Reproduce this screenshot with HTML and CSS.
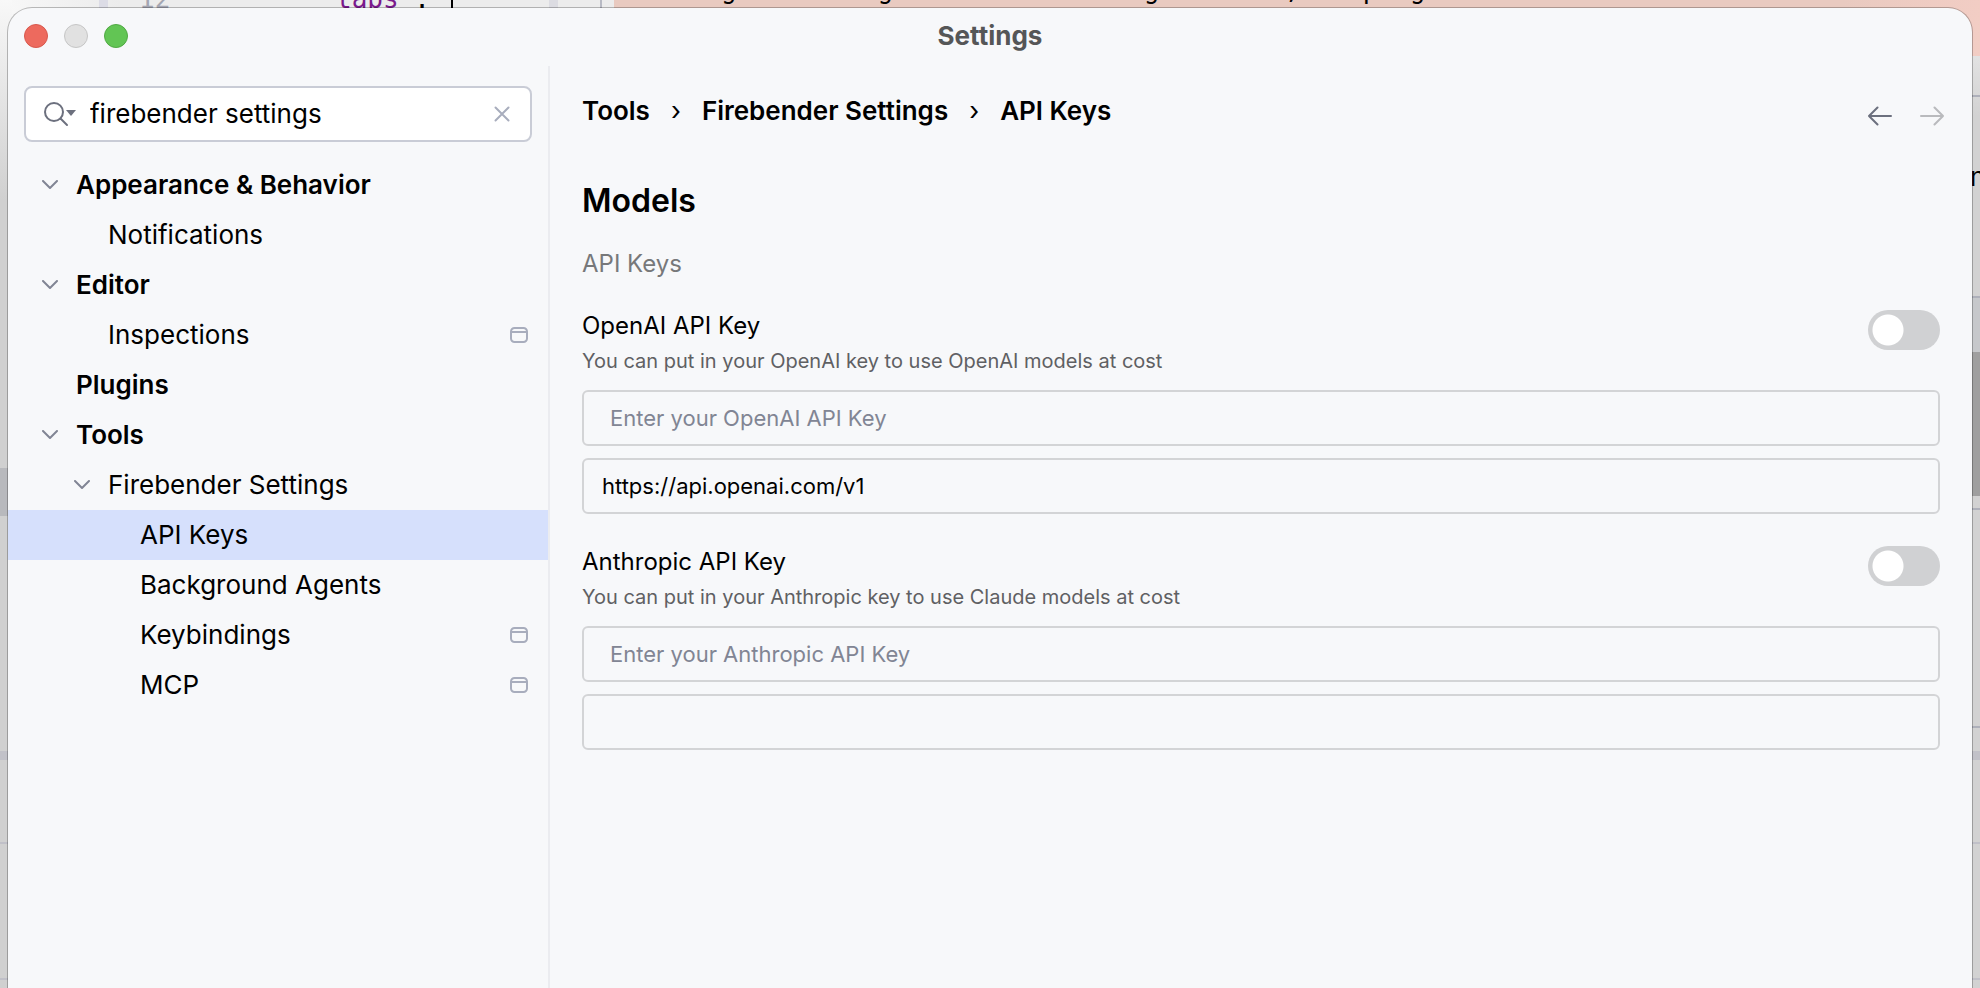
FILE: index.html
```html
<!DOCTYPE html>
<html lang="en">
<head>
<meta charset="utf-8">
<meta name="viewport" content="width=device-width, initial-scale=1">
<title>Settings</title>
<link rel="stylesheet" href="styles.css">
</head>
<body>
<svg class="symbols" aria-hidden="true">
  <symbol id="chevron" viewBox="0 0 16 10"><path d="M1 1l7 7 7-7" fill="none" stroke="currentColor" stroke-width="2" stroke-linecap="round" stroke-linejoin="round"/></symbol>
  <symbol id="project" viewBox="0 0 18 16"><path d="M1 4.500A3.500 3.500 0 0 1 4.500 1h9A3.500 3.500 0 0 1 17 4.500v7a3.500 3.500 0 0 1-3.500 3.500h-9A3.500 3.500 0 0 1 1 11.500zM1 5h16" fill="none" stroke="currentColor" stroke-width="2"/></symbol>
</svg>

<div class="editor" aria-hidden="true">
  <div class="code">
    <span class="line-number">12</span>
    <span class="code-text"><span class="keyword">tabs</span> .</span>
    <span class="caret"></span>
    <div class="diff"><span class="diff-text">g         g                g        ,    p  g</span></div>
  </div>
  <div class="edge edge-left"></div>
  <div class="edge edge-right"><span class="clipped">n</span></div>
</div>

<div class="window">
  <header class="titlebar">
    <div class="lights">
      <button class="light close" aria-label="Close"></button>
      <button class="light minimize" aria-label="Minimize" disabled></button>
      <button class="light zoom" aria-label="Zoom"></button>
    </div>
    <h1 class="title">Settings</h1>
  </header>

  <aside class="sidebar">
    <div class="search">
      <button class="icon-button" aria-label="Search history">
        <svg width="34" height="26" viewBox="0 0 34 26" fill="none"><circle cx="10" cy="11" r="9" stroke="#6c707e" stroke-width="2"/><path d="M16.500 17.500L23 24" stroke="#6c707e" stroke-width="2" stroke-linecap="round"/><path d="M22 9h10l-5 6z" fill="#6c707e"/></svg>
      </button>
      <input class="search-input" type="text" value="firebender settings" aria-label="Search settings">
      <button class="icon-button clear" aria-label="Clear search">
        <svg width="16" height="16" viewBox="0 0 16 16"><path d="M1.500 1.500l13 13M14.500 1.500l-13 13" stroke="#a8adbd" stroke-width="2" stroke-linecap="round"/></svg>
      </button>
    </div>
    <nav aria-label="Settings categories">
      <ul class="tree">
        <li class="row group"><button class="icon-button twisty" aria-label="Collapse Appearance &amp; Behavior"><svg width="16" height="10"><use href="#chevron"/></svg></button><a href="#appearance">Appearance &amp; Behavior</a></li>
        <li class="row level-1"><span class="twisty"></span><a href="#notifications">Notifications</a></li>
        <li class="row group"><button class="icon-button twisty" aria-label="Collapse Editor"><svg width="16" height="10"><use href="#chevron"/></svg></button><a href="#editor">Editor</a></li>
        <li class="row level-1"><span class="twisty"></span><a href="#inspections">Inspections</a><svg class="project" width="18" height="16"><use href="#project"/></svg></li>
        <li class="row group"><span class="twisty"></span><a href="#plugins">Plugins</a></li>
        <li class="row group"><button class="icon-button twisty" aria-label="Collapse Tools"><svg width="16" height="10"><use href="#chevron"/></svg></button><a href="#tools">Tools</a></li>
        <li class="row level-1"><button class="icon-button twisty" aria-label="Collapse Firebender Settings"><svg width="16" height="10"><use href="#chevron"/></svg></button><a href="#firebender">Firebender Settings</a></li>
        <li class="row level-2 selected"><span class="twisty"></span><a href="#api-keys" aria-current="page">API Keys</a></li>
        <li class="row level-2"><span class="twisty"></span><a href="#agents">Background Agents</a></li>
        <li class="row level-2"><span class="twisty"></span><a href="#keybindings">Keybindings</a><svg class="project" width="18" height="16"><use href="#project"/></svg></li>
        <li class="row level-2"><span class="twisty"></span><a href="#mcp">MCP</a><svg class="project" width="18" height="16"><use href="#project"/></svg></li>
      </ul>
    </nav>
  </aside>

  <main class="content">
    <div class="content-head">
      <nav class="crumbs" aria-label="Breadcrumb">
        <a href="#tools">Tools</a><span class="separator">›</span><a href="#firebender">Firebender Settings</a><span class="separator">›</span><a href="#api-keys">API Keys</a>
      </nav>
      <div class="history">
        <button class="icon-button" aria-label="Back"><svg width="24" height="20" viewBox="0 0 24 20"><path d="M23 10H1M9.500 1.500L1 10l8.500 8.500" fill="none" stroke="#6c707e" stroke-width="2" stroke-linecap="round" stroke-linejoin="round"/></svg></button>
        <button class="icon-button" aria-label="Forward" disabled><svg width="24" height="20" viewBox="0 0 24 20"><path d="M1 10h22M14.500 1.500L23 10l-8.500 8.500" fill="none" stroke="#b9babd" stroke-width="2" stroke-linecap="round" stroke-linejoin="round"/></svg></button>
      </div>
    </div>

    <h2 class="heading">Models</h2>
    <h3 class="subheading">API Keys</h3>

    <section class="provider">
      <div class="provider-head">
        <div>
          <label class="name" for="openai-on">OpenAI API Key</label>
          <p class="hint">You can put in your OpenAI key to use OpenAI models at cost</p>
        </div>
        <input class="switch" type="checkbox" role="switch" id="openai-on">
      </div>
      <input class="field key" type="text" placeholder="Enter your OpenAI API Key" aria-label="OpenAI API key">
      <input class="field" type="text" value="https://api.openai.com/v1" aria-label="OpenAI base URL">
    </section>

    <section class="provider">
      <div class="provider-head">
        <div>
          <label class="name" for="anthropic-on">Anthropic API Key</label>
          <p class="hint">You can put in your Anthropic key to use Claude models at cost</p>
        </div>
        <input class="switch" type="checkbox" role="switch" id="anthropic-on">
      </div>
      <input class="field key" type="text" placeholder="Enter your Anthropic API Key" aria-label="Anthropic API key">
      <input class="field" type="text" aria-label="Anthropic base URL">
    </section>
  </main>
</div>
</body>
</html>
```
FILE: styles.css
```css
* { box-sizing: border-box; }

body {
  margin: 0;
  padding: 8px 8px 0;
  position: relative;
  min-height: 100vh;
  overflow: hidden;
  font: 26px/32px Inter, "Liberation Sans", sans-serif;
  color: #000;
}

h1, h2, h3, p, ul { margin: 0; padding: 0; }
a { color: inherit; text-decoration: none; }
svg { display: block; }
.symbols { position: absolute; width: 0; height: 0; }

.icon-button {
  display: flex;
  align-items: center;
  justify-content: center;
  padding: 0;
  border: 0;
  background: none;
}

/* Editor showing behind the dialog */
.editor {
  position: absolute;
  inset: 0;
  background: #efefef;
}

.code {
  position: absolute;
  inset: 0 0 auto;
  height: 56px;
  overflow: hidden;
  background:
    linear-gradient(#dcdce6, #dcdce6) 99px 0 / 9px 100% no-repeat,
    linear-gradient(#dcdce2, #dcdce2) 549px 0 / 9px 100% no-repeat,
    linear-gradient(#b8bac4, #b8bac4) 600px 0 / 2px 100% no-repeat,
    linear-gradient(90deg, #f8f8f8, #ececec 120px);
  font: 26px/32px "DejaVu Sans Mono", monospace;
  white-space: pre;
}

.line-number, .code-text, .caret, .diff, .diff-text { position: absolute; }
.line-number { left: 139px; top: -17px; color: #a4a6b2; }
.code-text { left: 336px; top: -17px; }
.keyword { color: #7a1a8c; }
.caret { left: 451px; top: 0; width: 2px; height: 8px; background: #000; }
.diff {
  left: 614px;
  right: 0;
  top: 0;
  height: 56px;
  background: linear-gradient(90deg, #e9cac0, #e9cac0 90%, #f2cdc4);
}
.diff-text { left: 107px; top: -27px; }

.edge { position: absolute; bottom: 0; width: 12px; }
.edge-left {
  left: 0;
  top: 0;
  background:
    linear-gradient(#b8b9bd, #b8b9bd) 0 468px / 100% 48px no-repeat,
    linear-gradient(#c1c1c8, #c1c1c8) 0 751px / 100% 9px no-repeat,
    linear-gradient(#c0c0c8, #c0c0c8) 0 842px / 100% 2px no-repeat,
    linear-gradient(#c0c0c8, #c0c0c8) 0 978px / 100% 2px no-repeat,
    linear-gradient(#f8f8f8, #f0f0f0 40px, #d0d0d0 200px);
}
.edge-right {
  right: 0;
  top: 56px;
  overflow: hidden;
  background:
    linear-gradient(#aeb0ba, #aeb0ba) 0 39px / 100% 2px no-repeat,
    linear-gradient(#aeb0ba, #aeb0ba) 0 240px / 100% 2px no-repeat,
    linear-gradient(#c6c8cb, #c6c8cb) 0 242px / 100% 54px no-repeat,
    linear-gradient(#9f9f9f, #9f9f9f) 0 296px / 100% 144px no-repeat,
    linear-gradient(#aeb0ba, #aeb0ba) 0 452px / 100% 2px no-repeat,
    linear-gradient(#aeb0ba, #aeb0ba) 0 670px / 100% 2px no-repeat,
    linear-gradient(#c1c1c8, #c1c1c8) 0 695px / 100% 9px no-repeat,
    linear-gradient(#c0c0c8, #c0c0c8) 0 786px / 100% 2px no-repeat,
    linear-gradient(#c0c0c8, #c0c0c8) 0 922px / 100% 2px no-repeat,
    linear-gradient(#e2e2e2, #d2d2d2 60px);
}
.clipped {
  display: block;
  padding: 105px 0 0 2px;
}

/* Dialog */
.window {
  position: relative;
  display: grid;
  grid-template-columns: 542px minmax(0, 1fr);
  grid-template-rows: 58px 1fr;
  min-height: calc(100vh - 8px);
  border-radius: 24px 24px 0 0;
  background: #f7f8fa;
  box-shadow: 0 0 0 1px rgba(0, 0, 0, .25);
}

.titlebar {
  grid-column: 1 / -1;
  display: grid;
  grid-template-columns: 1fr auto 1fr;
  align-items: start;
  padding: 12px 16px 0;
}
.lights { display: flex; gap: 16px; padding-top: 4px; }
.light {
  width: 24px;
  height: 24px;
  padding: 0;
  border: 1px solid;
  border-radius: 50%;
}
.close { background: #ed6a5e; border-color: #d8584d; }
.minimize { background: #e1e1e1; border-color: #c6c6c6; }
.zoom { background: #62c554; border-color: #50a943; }
.title { font-size: 26px; line-height: 32px; font-weight: 700; color: #555657; }

.sidebar { border-right: 2px solid #ebecf0; padding-top: 20px; }

.search {
  display: flex;
  align-items: center;
  height: 56px;
  margin: 0 16px 18px;
  padding: 0 20px 0 18px;
  border: 2px solid #c9ccd6;
  border-radius: 8px;
  background: #fff;
}
.search-input {
  flex: 1;
  min-width: 0;
  padding: 0 0 0 12px;
  border: 0;
  outline: 0;
  background: none;
  font: inherit;
}

.tree { list-style: none; }
.row {
  display: flex;
  align-items: center;
  height: 50px;
  padding: 0 20px 0 32px;
}
.row a { flex: 1; }
.group { font-weight: 600; }
.level-1 { padding-left: 64px; }
.level-2 { padding-left: 96px; }
.selected { background: #d6e0fc; }
.twisty { width: 20px; margin-right: 16px; color: #818594; }
.project { color: #a8adbd; }

.content { padding: 24px 32px 32px; }
.content-head { display: flex; justify-content: space-between; height: 42px; }
.crumbs { display: flex; align-items: center; font-weight: 600; }
.separator { width: 52px; text-align: center; font-weight: 400; }
.history { display: flex; gap: 28px; align-self: flex-end; height: 32px; margin-right: -4px; }

.heading { margin-top: 49px; font-size: 32px; line-height: 40px; font-weight: 600; }
.subheading {
  margin: 27px 0 30px;
  font-size: 24px;
  line-height: 32px;
  font-weight: 400;
  color: #77787a;
}

.provider { display: grid; gap: 12px; margin-bottom: 32px; }
.provider-head { display: flex; justify-content: space-between; padding-bottom: 4px; }
.name { display: block; font-size: 24px; line-height: 32px; }
.hint { margin-top: 6px; font-size: 20px; line-height: 26px; color: #5f6063; }

.switch {
  appearance: none;
  width: 72px;
  height: 40px;
  margin: 0;
  border-radius: 20px;
  background: radial-gradient(circle at 20px 20px, #fff 15px, transparent 16px) #d0d1d3;
}
.switch:checked { background: radial-gradient(circle at 52px 20px, #fff 15px, transparent 16px) #3574f0; }

.field {
  width: 100%;
  height: 56px;
  padding: 0 18px;
  border: 2px solid #d3d4d6;
  border-radius: 6px;
  outline: 0;
  background: none;
  font: 22px/28px Inter, "Liberation Sans", sans-serif;
  color: #000;
}
.key { padding-left: 26px; }
.field::placeholder { color: #818594; opacity: 1; }
```
